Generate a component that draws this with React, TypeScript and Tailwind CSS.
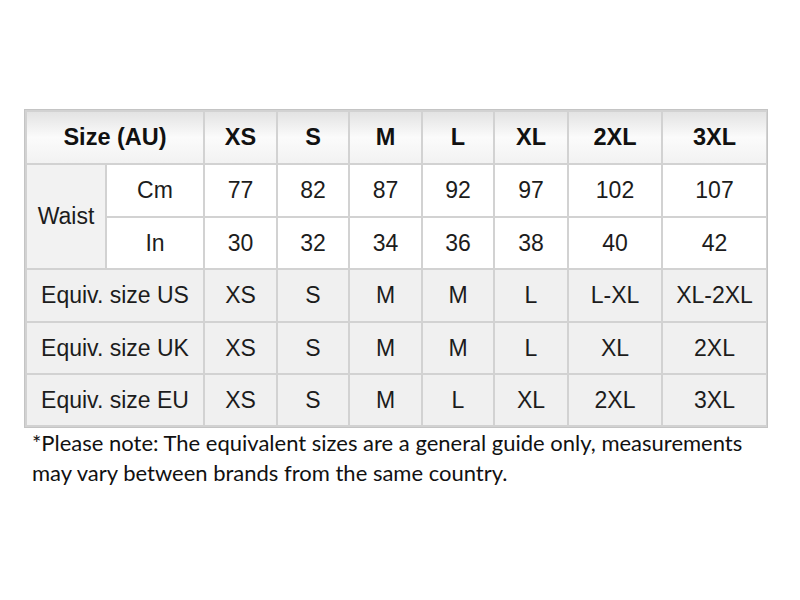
import React from 'react';

const sizes = ['XS', 'S', 'M', 'L', 'XL', '2XL', '3XL'];
const cm = ['77', '82', '87', '92', '97', '102', '107'];
const inches = ['30', '32', '34', '36', '38', '40', '42'];
const equiv = [
    { label: 'Equiv. size US', values: ['XS', 'S', 'M', 'M', 'L', 'L-XL', 'XL-2XL'] },
    { label: 'Equiv. size UK', values: ['XS', 'S', 'M', 'M', 'L', 'XL', '2XL'] },
    { label: 'Equiv. size EU', values: ['XS', 'S', 'M', 'L', 'XL', '2XL', '3XL'] },
];

const headCell = 'flex items-center justify-center bg-linear-to-b from-[#e3e3e3] via-[#fbfbfb] to-[#f2f2f2] font-bold text-[23.5px] text-[#111]';
const whiteCell = 'flex items-center justify-center bg-white text-[23px] text-[#1c1c1c]';
const grayCell = 'flex items-center justify-center bg-[#f0f0f0] text-[23px] text-[#1c1c1c]';

const App: React.FC = () => {
    return (
        <div className="w-[800px] h-[600px] bg-white pt-[109px] pl-[24px]" style={{ fontFamily: '"Liberation Sans", Arial, sans-serif' }}>
            {/* size table */}
            <div className="grid w-[744px] grid-cols-[78px_96px_71px_70px_71px_70px_72px_92px_103px] grid-rows-[51px_51px_50px_51px_50px_50px] gap-[2px] p-[2px] bg-[#d2d2d2] border border-[#c4c4c4]">
                <div className={`${headCell} col-span-2`}>Size (AU)</div>
                {sizes.map((s) => (
                    <div key={s} className={headCell}>{s}</div>
                ))}

                <div className={`${grayCell} row-span-2 bg-[#f2f2f2]`}>Waist</div>
                <div className={whiteCell}>Cm</div>
                {cm.map((v) => (
                    <div key={'cm' + v} className={whiteCell}>{v}</div>
                ))}
                <div className={whiteCell}>In</div>
                {inches.map((v) => (
                    <div key={'in' + v} className={whiteCell}>{v}</div>
                ))}

                {equiv.map((row) => (
                    <React.Fragment key={row.label}>
                        <div className={`${grayCell} col-span-2`}>{row.label}</div>
                        {row.values.map((v, i) => (
                            <div key={row.label + i} className={grayCell}>{v}</div>
                        ))}
                    </React.Fragment>
                ))}
            </div>

            {/* note */}
            <p className="pl-[8px] text-[22px] leading-[30px] text-[#111]" style={{ fontFamily: 'Lato, "Open Sans", sans-serif' }}>
                *Please note: The equivalent sizes are a general guide only, measurements
                <br />
                may vary between brands from the same country.
            </p>
        </div>
    );
};

export default App;
